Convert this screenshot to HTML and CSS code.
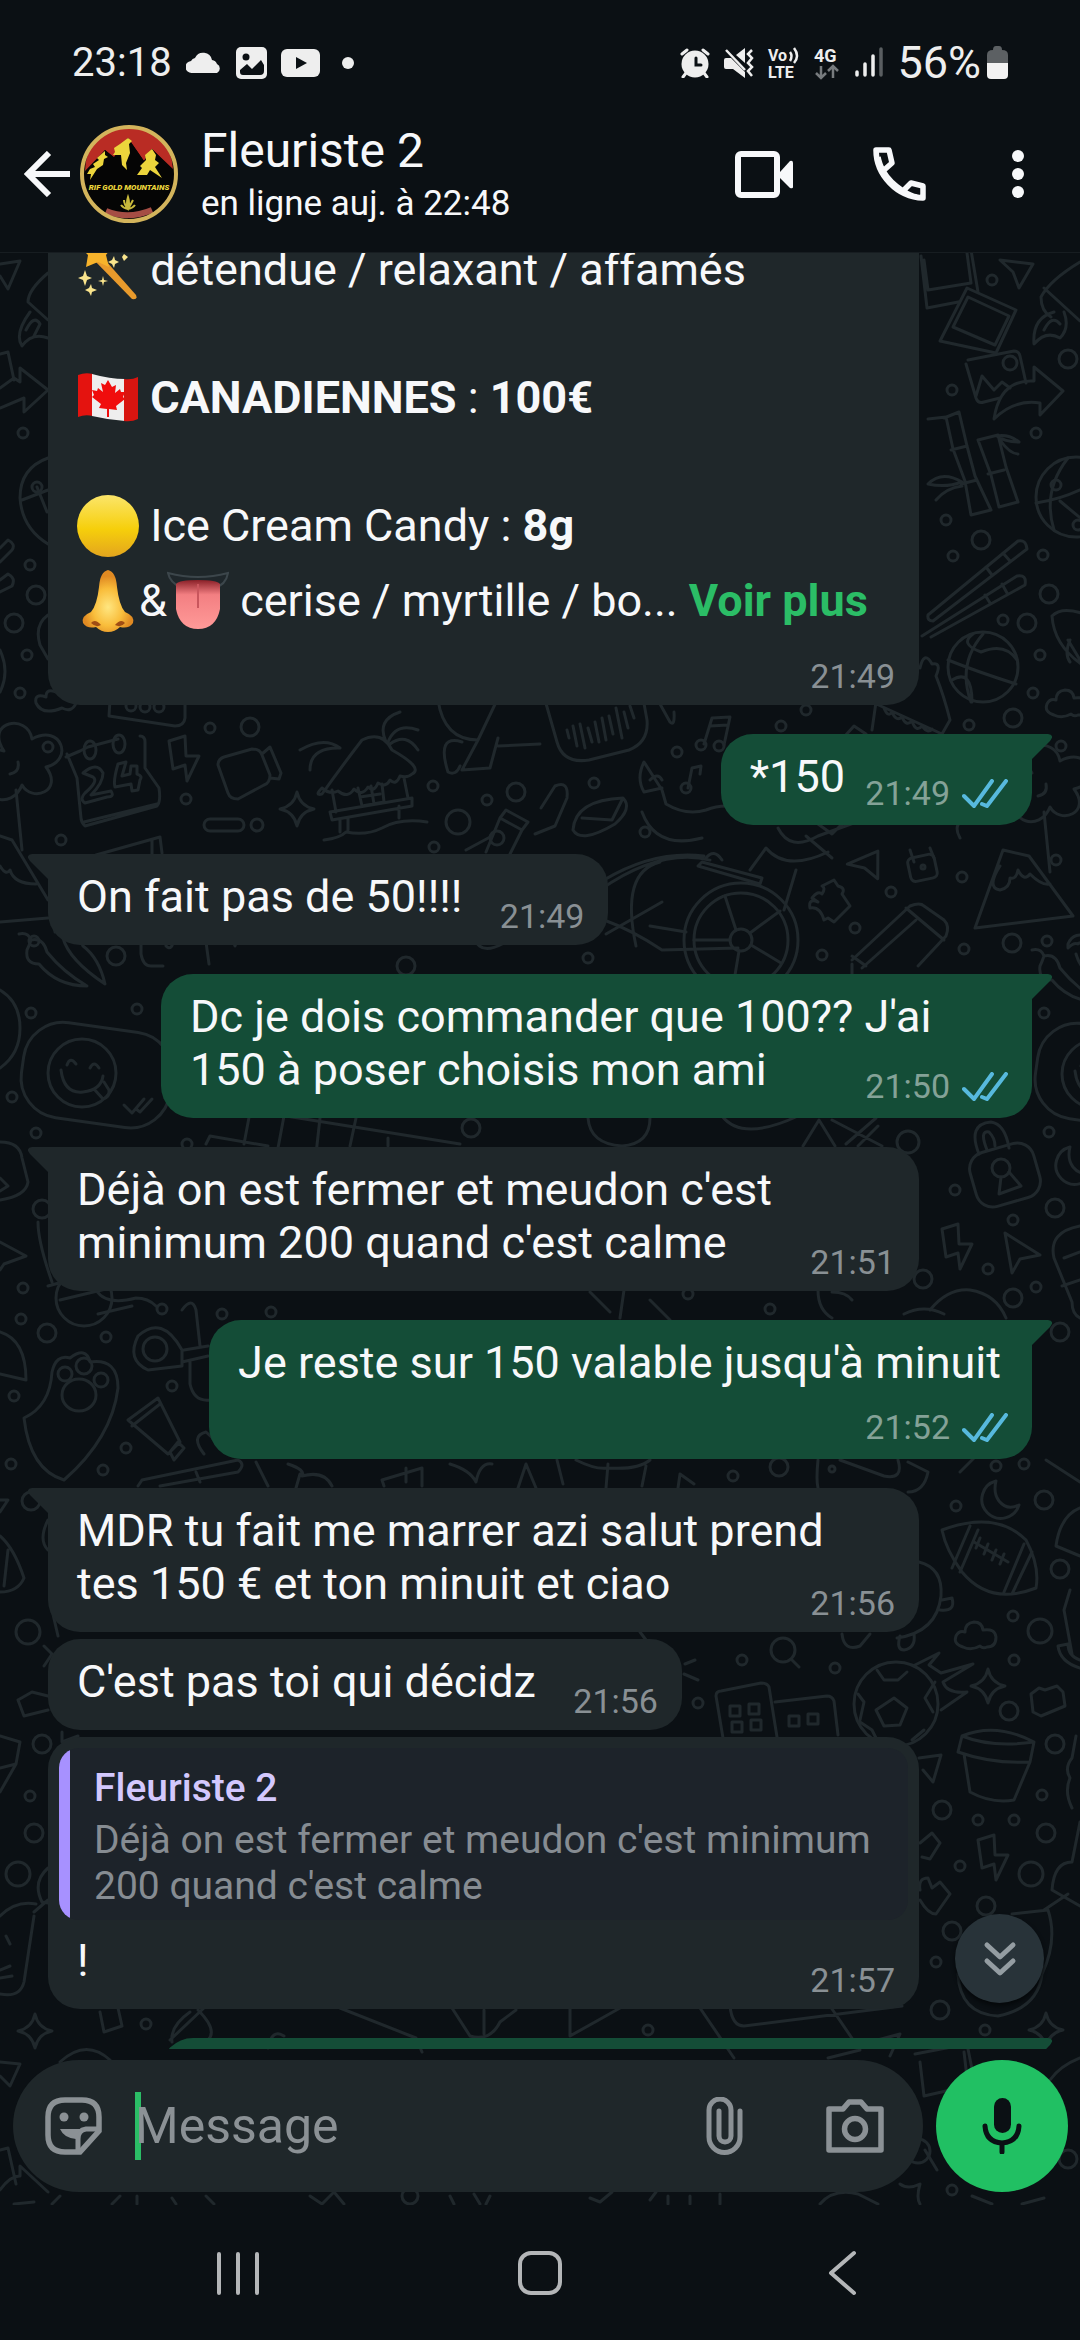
FILE: index.html
```html
<!DOCTYPE html>
<html lang="fr">

<head>
  <meta charset="UTF-8">
  <meta name="viewport" content="width=device-width, initial-scale=1.0">
  <title>Fleuriste 2</title>
  <link rel="stylesheet" href="styles.css">
</head>

<body>
  <div class="status">
    <span class="clock">23:18</span>
    <svg width="36" height="22" viewBox="0 0 36 22"><path d="M6 21a6 6 0 0 1-1-12 6 6 0 0 1 4-3 9 9 0 0 1 17 2 6 6 0 0 1 5 4 5 5 0 0 1 0 9z" fill="#eee"/></svg>
    <svg width="31" height="32" viewBox="0 0 31 32"><rect width="31" height="32" rx="5" fill="#eee"/><circle cx="10" cy="10" r="3.5" fill="#0b1014"/><path d="M4 23l7-6 5 5 9-9 3 5v6q0 4-4 4H7q-3 0-3-3z" fill="#0b1014"/></svg>
    <svg width="39" height="28" viewBox="0 0 39 28"><rect width="39" height="28" rx="6" fill="#eee"/><path d="M15 8l11 6-11 6z" fill="#0b1014"/></svg>
    <svg class="dot" width="12" height="12" viewBox="0 0 12 12"><circle cx="6" cy="6" r="6" fill="#eee"/></svg>
    <span class="space"></span>
    <svg width="30" height="30" viewBox="0 0 30 30" fill="none" stroke="#eee" stroke-width="3" stroke-linecap="round"><circle cx="15" cy="16" r="13.5" fill="#eee" stroke="none"/><path d="M2 6l5-4M28 6l-5-4M6 25l-3 4M24 25l3 4"/><path d="M16 10v7h5" stroke="#0b1014"/></svg>
    <svg width="30" height="30" viewBox="0 0 30 30"><path d="M0 12q0-2 2-2h5l14 14v6L9 21H2q-2 0-2-2zM12 7l9-7v15z" fill="#eee"/><path d="M2 2l19 20M28 2l-4 4 4 4-4 5 4 4-4 4 4 5" fill="none" stroke="#eee" stroke-width="2.5"/></svg>
    <svg width="32" height="34" viewBox="0 0 32 34" class="net"><text x="0" y="15" font-size="16">Vo</text><text x="0" y="32" font-size="16">LTE</text><path d="M22 6q3 4 0 9M26 2q6 8 0 15" fill="none" stroke="#eee" stroke-width="2.5"/></svg>
    <svg width="27" height="34" viewBox="0 0 27 34" class="net"><text x="0" y="16" font-size="18">4G</text><path d="M7 20v12M2 27l5 5 5-5M19 32V20M14 25l5-5 5 5" fill="none" stroke="#777b7e" stroke-width="2.5"/></svg>
    <svg width="28" height="31" viewBox="0 0 28 31" stroke="#eee" stroke-width="3.5" stroke-linecap="round"><path d="M2 25v3M10 17v11M18 9v19"/><path d="M26 2v26" stroke="#5a5e61"/></svg>
    <span class="battery">56%</span>
    <svg class="cell" width="21" height="33" viewBox="0 0 21 33"><path d="M6 4q0-4 3-4h3q3 0 3 4 6 0 6 5v9H0V9q0-5 6-5z" fill="#5c6063"/><path d="M0 17h21v12q0 4-4 4H4q-4 0-4-4z" fill="#f2f2f2"/></svg>
  </div>

  <header>
    <button class="back" aria-label="Retour"><svg width="46" height="46" viewBox="0 0 46 46" fill="none" stroke="#f7f8fa" stroke-width="6"><path d="M46 23H5M25 2L4 23l21 21"/></svg></button>
    <svg class="avatar" width="98" height="98" viewBox="0 0 98 98">
      <circle cx="49" cy="49" r="47" fill="#050505"/>
      <path d="M5 46a44 44 0 0 1 88-2L72 24 64 36 48 13 34 32 25 25z" fill="#b92c24"/>
      <path d="M25 25l9 8L48 13l16 23 8-12 21 22v6H5z" fill="#050505"/>
      <path d="M48 13l-8 6-6 4 1 4-2 3 8 0 1 10 5 5-1-7 4-10-1-9 3-3zM25 26l-8 7 2 2-6 4 2 3-5 2-3 5 4 0-1 6 7-11 6-4 1-6 4-2-3-2zM72 24l-7 6 1 5-6 6 2 2-5 7 10 0 3-5 12 8-7-11 4-4-4-3 1-5z" fill="#ecd53c"/>
      <text x="49" y="65" text-anchor="middle" class="logo">RIF GOLD MOUNTAINS</text>
      <path d="M48 84q-2-6 0-12 2 6 0 12-4-5-4-9M48 84q3-5 5-9M48 84q-5-1-7-4M48 84q5-1 7-4" fill="none" stroke="#c8b93c" stroke-width="2"/>
      <path d="M26 86q22 9 46-1" fill="none" stroke="#a54d44" stroke-width="6"/>
      <circle cx="49" cy="49" r="47" fill="none" stroke="#d3b45c" stroke-width="4"/>
    </svg>
    <div class="who">
      <h1>Fleuriste 2</h1>
      <p>en ligne auj. à 22:48</p>
    </div>
    <button aria-label="Appel vidéo"><svg width="58" height="48" viewBox="0 0 58 48"><rect x="3" y="4" width="39" height="41" rx="3" fill="none" stroke="#f7f8fa" stroke-width="6"/><path d="M45 22l10-11q3-1 3 2v24q0 2-3 1L45 28z" fill="#f7f8fa"/></svg></button>
    <button class="call" aria-label="Appel vocal"><svg width="53" height="54" viewBox="0 0 53 54" fill="none" stroke="#f7f8fa" stroke-width="5.5" stroke-linejoin="round"><path d="M3 3h13l3 13-9 8q7 12 20 20l8-8 12 3v12C24 50 3 28 3 3zM10 24q-4-8-5-14M30 44q8 5 14 6"/></svg></button>
    <button class="more" aria-label="Plus d'options"><svg width="12" height="48" viewBox="0 0 12 48" fill="#f7f8fa"><circle cx="6" cy="6" r="6"/><circle cx="6" cy="24" r="6"/><circle cx="6" cy="42" r="6"/></svg></button>
  </header>

  <main>
    <svg class="doodles" viewBox="0 253 1080 1952" preserveAspectRatio="xMinYMin slice">
      <defs>
        <path id="bolt" d="M-14-17l16-5 1 20 13 0-12 25-2-16-12 4z"/>
        <path id="star" d="M0-17q3 14 17 17Q3 3 0 17-3 3-17 0-3-3 0-17z"/>
        <path id="cloud" d="M-13 10q-10-3-7-11 3-6 9-4 0-9 9-10 8 0 9 8 12-2 13 7 0 10-9 10-4 2-7-1-9 5-17 1z"/>
        <path id="plane" d="M-17-12l33 4-14 24-6-16z"/>
        <path id="moon" d="M-5-18a19 19 0 1 0 23 24Q6 12-2 2-8-6-5-18z"/>
        <path id="arrow" d="M-34 28q6-40 40-38v-14L35 0 12 24V12Q-14 8-34 28z"/>
        <g id="flower"><path d="M-8-15c-20-30 24-38 28-12 30-16 42 22 14 28 18 24-14 36-24 18-10 26-46 14-28-10-30 0-26-34 10-24z"/><path d="M-2 8q10-2 8-12M4 24l6 60"/></g>
        <g id="ball"><circle r="40"/><path d="M-40 6Q0 0 32-24M-22 33Q-34-6-8-39M-16 4Q12 28 22 33M8-6l26 26"/><circle cx="-20" cy="-12" r="5"/><circle cx="2" cy="28" r="5"/></g>
        <g id="smile"><rect x="-60" y="-48" width="150" height="96" rx="40" transform="rotate(8)"/><circle r="34"/><path d="M-21-3q3 24 22 22 18-2 20-16M-15-8q3-9 9-1M8-5q4-8 9 0M12 16l9 10q7-2 6-9l-5-8"/><path d="M42 32l8 8 12-14M54 36l4 3 12-13"/></g>
        <g id="peppers"><path d="M-48-26q9-2 12 6 12-3 16 12Q-4 12 20 26-10 26-28 4-42 4-40-10-38-14-36-20M-4-22Q2 0 38 24 32-2 16-14 12-22 12-34M-12-32q6-14 22-6 7-4 10 2-8 0-10 8-8-8-12-4-4-2-10 4z"/></g>
        <g id="pot"><path d="M-34-30Q0-44 38-24l-4 20Q-4-2-38-14zM-32-12l6 38Q-4 38 18 34L34-4M-34-30Q-4-18 38-24"/></g>
        <g id="wheel"><circle r="57"/><circle r="47"/><circle r="11"/><path d="M-11 0h-36M-5-10l-11-34M9-7l30-22M10 5l30 18M-2 11l-6 36"/></g>
      </defs>
      <g fill="none" stroke="#20282c" stroke-width="3" stroke-linecap="round" stroke-linejoin="round">
        <!-- right column -->
        <path d="M921 256l6 52 52-10-8-48M924 260l4 30 43-7-4-30"/>
        <path d="M967 288l49 22-20 43-56-12zM968 297l41 19-14 29-42-18z" fill="#0b1014"/>
        <use href="#plane" x="1017" y="272"/>
        <path d="M1080 262q-30 18-39 35 0 14 10 20M1044 288l36 33M1054 312q-22 6-20 32 12-14 26-6 10-10 4-26M1044 330q8-16 16-6"/>
        <path d="M968 360l46-9q5 0 6 5l6 27M966 364l10 34q2 6 8 4l16-4M976 396l6-20 12 14 8-8 8 6"/><circle cx="1010" cy="363" r="7"/>
        <use href="#arrow" x="1028" y="391"/>
        <path d="M944 418l15-6 8 34 8 30 16 34-20 5-6-34-12-32-7-32-18 2M951 450l16-4M961 484l16-4M978 440l20-5 8 32 12 35-19 5-8-32zM988 474l16-4M997 436q12-2 22 6-14 0-22-6M1000 440q10 14 18 14M962 482q-20-12-34 2 18 4 34-2M962 486q-16 2-26 14"/>
        <use href="#ball" x="1076" y="497"/>
        <path d="M928 615l90-74q8-2 9 8l-94 72q-6 0-5-6zM922 636l95-60q10-2 8 9l-94 52M986 567l6 8M1003 553l7 8M985 595l5 8M1002 584l5 9"/>
        <circle cx="983" cy="667" r="35"/><path d="M948 660q30 12 68 24M973 634q-14 10 8 18 24-10 36 8M952 680q20-12 20 22M983 634q-26 30-12 68"/>
        <path d="M1052 616q10-10 32-2M1052 616q2 30 32 50M1068 640l12 20M1070 640q-6 14 0 22"/>
        <use href="#cloud" x="1067" y="705"/>
        <path d="M920 668q4-18 12-4 10-2 4 12 8 20 14 44l-8 14-70-32M876 702l-4 28M884 708q4 10 8 4 4 10 10 5 4 10 10 4 4 12 10 5 6 8 10 3"/>
        <use href="#flower" x="1040" y="788"/>
        <path d="M960 838q-8-14 6-20M834 748l20-22 12 8-22 30q-10 2-10-8"/>
        <!-- between the first bubbles -->
        <path d="M545 700l12 42q6 22 32 18l40-10q20-8 18-30l-4-22M567 730l2 8M573 726l4 20M580 724l5 24M588 728l4 14M595 722l4 20M602 718l4 22M609 716l4 18M616 708l6 30M624 712l4 16M630 706l4 12M660 704l10 18q5 5 4-10"/>
        <path d="M704 744l8-26 18-1-6 28M710 726l18-1M688 788l4-20 9-2-1 8"/><circle cx="701" cy="745" r="5"/><circle cx="719" cy="746" r="5"/><circle cx="686" cy="788" r="5"/>
        <path d="M644 792q-8-14 0-30l18 28 4 14q20 12 40 6 10-4 20-4M642 812q14 38 60 26M644 792l18-4M650 780q8-8 12 0"/>
        <path d="M541 808l14-22q14-6 12 12l-12 28-20 8M573 830q2-30 50-32 10 10-8 26-34 20-42 6M622 800l-10 20-30-2"/>
        <path d="M778 828q12 24 40 8l44-16M818 824l14 10 14-14M806 836l26 22"/>
        <path d="M66 757l14-6 8-4 30-8M140 736q5 0 5 6v26l14 20q2 14-2 18l-72 20q-4-4-4-8l-4-40-10-24M84 822l73-18"/><ellipse cx="90" cy="750" rx="6" ry="9"/><ellipse cx="119" cy="744" rx="6" ry="9"/>
        <path d="M83 773q14-12 20 0 0 10-12 22l20-4q4 6-4 6l-22 6q-6-4 0-10 14-12 8-16zM118 764l8-2-4 14 8-2 1-8 6 0v8q6 2 3 6l-2 10-6 1-1-7-16 3q-2-6 3-23"/>
        <use href="#bolt" x="183" y="758"/>
        <path d="M218 765q0-6 6-8l28-8q8 0 10 6l8 20q0 8-6 10l-26 14q-8 0-10-6zM262 754l8-7 11 26-2 6-9-1"/>
        <rect x="204" y="819" width="40" height="12" rx="6"/><circle cx="257" cy="825" r="6"/><use href="#star" x="297" y="809"/>
        <path d="M322 788q-8 8 0 6 20-28 40-54 20-10 30 10 32 18 20 24-4 4-12 2-4 10-10 4-4 8-12 3-4 10-10 4-6 10-14 2-6 10-16 2-8 4-16-3M340 748q-16-12-40 2M338 748q-28 0-28 22M386 742q-10-22 14-30M388 742q8-20 30-12M390 744q16-12 28 6M330 812l82-14v8l-80 14zM332 790l4 22M404 778l4 20M358 788l4 18 22-4-2-18M360 797l20-3M371 786l3 18M340 820v12M348 818v12M399 806v12M324 840q16-2 22-8 20 4 36-4 18-10 45-6"/>
        <path d="M438 700q6 40 40 40l20-42M478 740l-16 30 28-2 8-30M462 742q-26-8-14 30 8 4 12-6M498 746l42-2"/>
        <path d="M506 810l22 12-6 8-22-12zM500 818l-14 34M522 830l-12 24M492 836l-26 14"/><circle cx="497" cy="838" r="7"/>
        <path d="M36 703q-2-10 10-6 0-10 12-4 14-2 18 10-4 10-14 5-20 8-26-5M110 700l-1 16 66 10q9 0 10-8v-20"/><circle cx="131" cy="706" r="5"/><circle cx="145" cy="707" r="5"/><circle cx="159" cy="707" r="5"/>
        <use href="#flower" x="12" y="766"/>
        <path d="M96 855l64-18 2 16M152 840v14M0 836l12 4 36 60M0 866q6 10 10 4 4 14 26 14M0 922l48-4"/>
        <!-- left column -->
        <path d="M0 264l20-3-12 28-8-13M48 273Q28 290 28 302l20 18M30 312q-16 22-8 34 10-14 26-8M26 330q8-16 14-6l-6 12M0 354l8-2 6 28M0 388l14-10 6 4v-14l28 22-24 22v-14L0 408"/>
        <circle cx="23" cy="433" r="5"/><path d="M48 458q-28 10-28 40 2 30 28 46M22 500l26-10M37 487l10 25"/><circle cx="37" cy="487" r="5"/>
        <path d="M0 548l8-8q8 4 4 10L0 562M0 580l8-6q8 4 4 12L0 592M48 615q-14 10-8 30l8 14M0 650q10 22 0 42"/>
        <path d="M141 920v34q2 12 10 12h12M160 936q4 12 18 0v-4M166 936v10q6 6 8-8M203 920l6 44M472 920q0 40 30 24M504 924l4 8 4-8"/>
        <use href="#star" x="235" y="929"/><rect x="272" y="924" width="40" height="11" rx="5"/><rect x="319" y="924" width="40" height="11" rx="5"/>
        <use href="#peppers" x="67" y="960"/><use href="#smile" x="82" y="1073"/>
        <path d="M0 990q20 12 20 38T0 1068M206 1144l4-8 58 10M250 1112l-6 32M284 1116l-6 32M320 1118l-4 36M356 1118l-6 28M286 1116l174 28M388 1138v8"/>
        <path d="M0 1142q20 0 22 16l6 24q-2 14-28 18M0 1178l8 8-8 5M0 1242l26 14-22 8-4 6M38 1222q0 20 14 60M48 1286l22-6M96 1290q10 16 40 8 12 0 20 8"/>
        <!-- middle right -->
        <path d="M604 920q28 10 58 30l76-2M660 862q-40 10-24 84M600 890q60-42 110-30M604 880q50-30 100-24M650 926l36 6M606 934l56-32"/>
        <path d="M702 862l60 16-2 6-62-18zM706 858q8-10 16 2" fill="#0b1014"/><use href="#wheel" x="741" y="940"/>
        <path d="M750 870l16-22q20 24 62 4M796 870l-12 40"/>
        <path d="M812 898q6-8 10-4 4-6 0-8l12-6 4 6q8 2 4 8l8 12-16 16-6-4-4 2q-4-14-14-12-2-10 8-6z"/>
        <path d="M852 960l58-54q10-4 14 0l20 14q6 6 2 16l-28 30M862 968l54-48M906 908l38 32M852 956l14 10M852 964v10"/>
        <path d="M914 862l-4-12M934 858l-4-10"/><rect x="909" y="856" width="27" height="24" rx="5" transform="rotate(-12 922 868)"/><circle cx="923" cy="867" r="2"/>
        <use href="#plane" x="868" y="866" transform="rotate(-30 868 866)"/>
        <path d="M1003 850l-28 78 98-12-44-60zM1000 866q-14 22 0 24 10-2 10-12 6 2 8-8 6 12 12 4 12 12 20 10"/>
        <use href="#peppers" x="1080" y="976"/><use href="#smile" x="1096" y="1074"/>
        <path d="M588 1118q2 26 34 28 28-2 28-28M722 1116q20 26 76 0M803 1146l16-26 16 26M832 1120l50 26M846 1144l30-26M858 1146l20-20"/>
        <rect x="972" y="1147" width="66" height="56" rx="17" transform="rotate(-16 1005 1175)"/><circle cx="1001" cy="1168" r="9"/><path d="M1001 1177l-2 17 22-8-12-14M979 1154q-12-30 12-32 14 2 18 26M987 1150q-8-20 2-18 6 6 6 14"/>
        <use href="#moon" x="1075" y="1165"/><use href="#bolt" x="956" y="1246"/>
        <path d="M1005 1233l35 22-20 4-8 14zM1080 1226q-32 6-26 32l18 44q0 12 8 16M1064 1258l16-6M1062 1286l18-6"/>
        <path d="M818 1290q0 20 14 28M832 1292q14 0 20 8M904 1314q20-10 40 0M930 1310q18-22 40-20 26 4 36 28M590 1292l20 20M624 1290l-4 28M650 1300l20 20"/>
        <!-- middle left -->
        <circle cx="84" cy="1298" r="28"/><path d="M98 1314l34-8M60 1300l50-12"/>
        <path d="M0 1332q26 8 26 48L0 1374M24 1418q26-12 28-46 4-18 18-14 16-12 20 4 28-4 28 26-6 50-54 92-34-10-40-62z"/><circle cx="65" cy="1374" r="7"/><circle cx="84" cy="1366" r="8"/><circle cx="101" cy="1380" r="7"/><ellipse cx="79" cy="1395" rx="17" ry="16"/>
        <path d="M182 1350q-20-36-44-14-12 24 10 34l34-4zM184 1350l24-4M182 1362l26-6M182 1310q10-14 14 0l4 36M190 1362v22q4 18 20 16"/><circle cx="155" cy="1349" r="12"/>
        <path d="M128 1420l30-22 22 44-12 12zM132 1426l28-22M170 1452l8-10 6 6-10 12zM138 1486l4-6 96-20q8 4 0 12l-78 14M196 1472l4 10M204 1454q-14-18 2-22l26 24M256 1462l12 24M288 1464q18 6 14 12 22-6 30 10M300 1474l-4 14M384 1486l-2-6 40-12v18M406 1468v14M450 1464q20 6 26 18 4-20 16-18M518 1488l8-24 10 24"/>
        <path d="M0 1500l8 0-8 12M0 1536q14 12 24 42-6 14-24 14M8 1550l-4 36M48 1520q-10 20 0 30M52 1610l6 26M44 1646l8 8-8 12M18 1700l14-8 16 4M18 1700l6 16 24-6M0 1736l20 6-4 22-16 4M16 1764l-16 28M62 1732v10l16-6M48 1868q-16 14-6 34l12 2M36 1904q-20-4-36 12M0 1994q20 4 24-12l10-66M34 1912l14-12M6 1936l4 8M0 1970l10-4M0 1978l12-2"/>
        <path d="M557 1460l6 24M608 1464l-2 24M646 1466l-4 20M576 1460q20 10 32 8 30 2 42-8M818 1460q-2 20 0 28M840 1460l44 16q20 4 14-16M908 1462l20 10q-4 20-20 20M960 1472l14-14M678 1488l2-14 14 10"/>
        <use href="#moon" x="1001" y="1499"/>
        <path d="M942 1530q54-20 84 10 14 26 10 48-46 18-74-16-16-22-20-42zM952 1568l18-42M960 1572l18-42M1004 1592l20-48M1012 1594l20-42M974 1542l34 20M980 1538l-4 10M988 1544l-4 10M996 1550l-4 10M1004 1554l-4 10M1046 1460l34 22M1080 1508q-20 8-24 38l24 10"/>
        <path d="M919 1562q24 6 22 34-4 36-44 42M942 1600l10-2q4 14-12 12M900 1636q-4 14 4 14 12-2 10-16M842 1634q2 18 18 12l10-12"/>
        <use href="#cloud" x="976" y="1637"/><circle cx="783" cy="1650" r="12"/><path d="M791 1659l8 8M685 1664l10-4M684 1674l14 6M640 1632l6 8"/>
        <circle cx="896" cy="1704" r="42"/><path d="M877 1670l7 10 14 0 9-8M876 1710l18-12 13 10-7 17-16 1zM858 1694l6 8-4 18M935 1682l-10 16 8 14M915 1665l24-12-10 12 12 8 32-9-30 18q4 12 24 10l-26 18M860 1722l12 8 4 8M912 1740l12-10"/>
        <path d="M723 1738l-7-42q0-5 5-5l40-8q6 0 8 4l8 50M775 1702l52-6q5 0 7 5l4 34M730 1706h10v10h-10zM749 1704h10v10h-10zM732 1722h10v10h-10zM751 1720h10v10h-10zM789 1716h10v10h-10zM808 1714h10v10h-10z"/>
        <use href="#star" x="988" y="1686"/><path d="M1031 1694l8-6 6 2 12-4 6 6 2 14-24 10-8-4zM1080 1668q-20-6-22-22l10-2q0 12 12 16M1070 1590l-6 20 8 44"/>
        <use href="#pot" x="996" y="1766"/>
        <path d="M919 1758l22-3-8 27-10-12M920 1843l12-10 8 10-10 16-8-2M1076 1736l-4 22q-8 10-2 20-6 14 2 30"/>
        <use href="#bolt" x="992" y="1857"/><path d="M920 1890q-2-12 8-12l4 10 8-6 10 12-14 20q-8 0-16-14M1080 1822l-8 40q-18 0-20 28l28 16M1012 1914l36-4q10 30-6 64-4 34-44 42-38-2-40-42M1044 1910l24-16"/>
        <use href="#star" x="1046" y="2030"/>
        <!-- below the last message -->
        <path d="M100 2012l4 20 18-6-4-18M170 2040l36-34M198 2010q20 20 10 30M190 2012q-20 14-18 30M340 2008l76 30 6 14M268 2048q4-20 16-12M452 2008l18 28q20 6 30-14l16-12M484 2010v24M570 2008v28l50-28M700 2008l34 50M730 2006q2 20 14 20l158-20M830 2006l30 44-32 8M870 2042l30-8-10 22"/>
        <use href="#star" x="35" y="2031"/>
        <path d="M60 2062q26-24 50-2M0 2062l20 2-10 22-10-10M915 2054l52-10 12 60M920 2062l4 34 44-10-4-34M1050 2080q10-14 30-22M925 2150l12 20M0 2150l8-2 8 36M0 2190q10-14 20-14v-10l28 26M14 2204l20-2M60 2196l-8 8M120 2196l-8 8M137 2196v8M172 2198l4 6M206 2196l8 8M310 2196l12 8 12-12 10 12M480 2204l-6-10M590 2198l10 4 12-10M720 2194v10M650 2200l6-8"/>
        <path d="M820 2204q14-16 38-10l20 10M900 2184q8 6 20 0-4 14 0 20M972 2196l20 8M1022 2204l22-6M450 2196l4 8M490 2196l-4 8M668 2196v8M690 2196v8"/>
        <!-- dots -->
        <circle cx="992" cy="280" r="5"/><circle cx="1068" cy="359" r="9"/><circle cx="952" cy="390" r="5"/><circle cx="1036" cy="433" r="5"/><circle cx="946" cy="520" r="5"/><circle cx="981" cy="540" r="9"/><circle cx="953" cy="556" r="5"/><circle cx="1043" cy="555" r="5"/><circle cx="1049" cy="594" r="9"/><circle cx="1003" cy="620" r="5"/><circle cx="1027" cy="623" r="9"/><circle cx="1040" cy="655" r="5"/><circle cx="1033" cy="693" r="5"/><circle cx="1013" cy="718" r="9"/><circle cx="969" cy="725" r="5"/><circle cx="1061" cy="746" r="5"/>
        <circle cx="30" cy="565" r="5"/><circle cx="36" cy="595" r="9"/><circle cx="14" cy="623" r="9"/><circle cx="27" cy="655" r="5"/><circle cx="20" cy="693" r="5"/><circle cx="48" cy="747" r="5"/><circle cx="61" cy="840" r="5"/><circle cx="210" cy="728" r="5"/><circle cx="250" cy="727" r="9"/><circle cx="186" cy="799" r="5"/><circle cx="433" cy="786" r="5"/><circle cx="487" cy="800" r="5"/><circle cx="516" cy="792" r="9"/><circle cx="458" cy="822" r="12"/><circle cx="434" cy="847" r="5"/>
        <circle cx="677" cy="752" r="5"/><circle cx="594" cy="783" r="5"/><circle cx="645" cy="832" r="5"/><circle cx="781" cy="726" r="5"/><circle cx="806" cy="710" r="5"/><circle cx="34" cy="941" r="5"/><circle cx="116" cy="956" r="9"/><circle cx="31" cy="1013" r="5"/><circle cx="137" cy="1009" r="5"/><circle cx="12" cy="1097" r="5"/><circle cx="36" cy="1133" r="5"/><circle cx="42" cy="1209" r="9"/><circle cx="23" cy="1288" r="5"/><circle cx="406" cy="966" r="9"/><circle cx="471" cy="1128" r="9"/><circle cx="187" cy="1144" r="5"/>
        <circle cx="588" cy="958" r="5"/><circle cx="822" cy="955" r="5"/><circle cx="891" cy="892" r="5"/><circle cx="855" cy="928" r="5"/><circle cx="962" cy="877" r="5"/><circle cx="964" cy="949" r="5"/><circle cx="1012" cy="943" r="9"/><circle cx="1047" cy="941" r="5"/><circle cx="1056" cy="860" r="5"/><circle cx="1044" cy="1013" r="5"/><circle cx="1049" cy="1132" r="5"/><circle cx="908" cy="1142" r="11"/><circle cx="955" cy="1190" r="5"/><circle cx="1055" cy="1208" r="9"/><circle cx="1013" cy="1220" r="5"/><circle cx="988" cy="1269" r="5"/><circle cx="1036" cy="1287" r="5"/><circle cx="1013" cy="1298" r="9"/><circle cx="923" cy="1279" r="9"/><circle cx="770" cy="1309" r="5"/><circle cx="688" cy="1294" r="5"/><circle cx="1060" cy="1332" r="9"/>
        <circle cx="21" cy="1319" r="5"/><circle cx="47" cy="1333" r="9"/><circle cx="106" cy="1337" r="5"/><circle cx="162" cy="1309" r="5"/><circle cx="222" cy="1314" r="5"/><circle cx="271" cy="1312" r="5"/><circle cx="14" cy="1396" r="5"/><circle cx="172" cy="1386" r="5"/><circle cx="126" cy="1448" r="5"/><circle cx="103" cy="1470" r="5"/><circle cx="11" cy="1464" r="5"/><circle cx="31" cy="1501" r="9"/><circle cx="28" cy="1632" r="12"/><circle cx="42" cy="1744" r="9"/><circle cx="30" cy="1796" r="5"/><circle cx="34" cy="1833" r="9"/><circle cx="18" cy="1874" r="12"/>
        <circle cx="733" cy="1476" r="5"/><circle cx="779" cy="1467" r="9"/><circle cx="832" cy="1469" r="3"/><circle cx="996" cy="1466" r="5"/><circle cx="1024" cy="1464" r="5"/><circle cx="956" cy="1506" r="5"/><circle cx="1044" cy="1500" r="9"/><circle cx="1060" cy="1569" r="9"/><circle cx="1013" cy="1616" r="5"/><circle cx="1040" cy="1631" r="12"/><circle cx="1014" cy="1660" r="5"/><circle cx="742" cy="1660" r="5"/><circle cx="835" cy="1668" r="5"/><circle cx="698" cy="1703" r="5"/><circle cx="1009" cy="1711" r="9"/><circle cx="1055" cy="1744" r="9"/><circle cx="1042" cy="1795" r="5"/><circle cx="942" cy="1810" r="9"/><circle cx="978" cy="1820" r="5"/><circle cx="1014" cy="1820" r="5"/><circle cx="1046" cy="1833" r="9"/><circle cx="960" cy="1866" r="5"/><circle cx="1031" cy="1874" r="12"/><circle cx="986" cy="1906" r="9"/><circle cx="952" cy="1931" r="9"/><circle cx="936" cy="1962" r="5"/><circle cx="940" cy="2010" r="9"/><circle cx="985" cy="2030" r="5"/><circle cx="648" cy="2030" r="5"/><circle cx="146" cy="2024" r="5"/><circle cx="410" cy="2196" r="8"/><circle cx="952" cy="2190" r="5"/><circle cx="918" cy="2151" r="12"/><circle cx="1068" cy="2159" r="9"/>
      </g>
    </svg>

    <section class="messages">
      <div class="row">
        <div class="bubble in wide own-line">
          <p class="line"><svg class="emoji" viewBox="0 0 62 62"><path d="M22 14l37 42q2 5-4 4L16 20z" fill="#e89a2c"/><path d="M16 0l8 7 12 0-7 9 3 12-11-5-12 5 2-12-9-9 12-1z" fill="#f7b32b"/><g fill="#f9e48c"><path d="M8 31l2 6 5 2-5 2-2 6-2-6-5-2 5-2zM14 45l1 4 5 2-5 2-1 4-2-4-4-2 4-2zM26 37l1 4 4 1-4 1-1 4-1-4-4-1 4-1zM37 17l1 4 4 2-4 2-1 4-2-4-4-2 4-2zM47 15l4 3-4 4-2-4z"/></g></svg> détendue / relaxant / affamés</p>
          <p>&nbsp;</p>
          <p class="line"><svg class="emoji" viewBox="0 0 62 62"><path d="M1 8q7-3 15-1v42q-8-2-15 1z" fill="#e4130f"/><path d="M15 7q18 5 33 5v42q-16-1-33-5z" fill="#eee"/><path d="M47 12q8 1 14-2v42q-6 3-14 2z" fill="#d81510"/><path d="M31 13l4 7 4-2-1 8 5-4 1 3 4 0-2 5 2 2-9 7 1 4-8-1v8h-2v-8l-8-1 2-4-9-7 2-2-2-5 5 1 1-3 5 4-2-9 4 2z" fill="#f00d0d"/></svg> <b>CANADIENNES</b> : <b>100€</b></p>
          <p>&nbsp;</p>
          <p class="line"><svg class="emoji" viewBox="0 0 62 62"><defs><linearGradient id="gold" x2="0" y2="1"><stop offset="0" stop-color="#fbe56a"/><stop offset=".55" stop-color="#f6cf0b"/><stop offset="1" stop-color="#e3a51e"/></linearGradient></defs><circle cx="31" cy="31" r="31" fill="url(#gold)"/></svg> Ice Cream Candy : <b>8g</b></p>
          <p class="line"><svg class="emoji" viewBox="0 0 62 62"><defs><radialGradient id="skin" cy=".6"><stop offset="0" stop-color="#ffe680"/><stop offset=".6" stop-color="#f9bd3b"/><stop offset="1" stop-color="#e08a22"/></radialGradient></defs><path d="M31 0q8 2 9 17 2 18 8 25 10 4 8 11-4 6-13 4-5 5-12 5t-12-5q-9 2-13-4-2-7 8-11 6-7 8-25 1-15 9-17z" fill="url(#skin)"/><path d="M14 53q4-5 10 2-5 3-10-2zM38 55q6-7 10-2-4 5-10 2z" fill="#a04d14"/></svg>&amp;<svg class="emoji" viewBox="0 0 62 62"><defs><linearGradient id="tongue" x2="0" y2="1"><stop offset="0" stop-color="#8a2028"/><stop offset=".3" stop-color="#f37f82"/><stop offset="1" stop-color="#ff9a98"/></linearGradient></defs><path d="M1 3q30 8 60 0-2 12-14 15-16-6-32 0Q3 13 1 3z" fill="#1f272b" stroke="#3c464b" stroke-width="2"/><path d="M9 14q3-4 22-4t22 4v25q-4 20-22 20T9 39z" fill="url(#tongue)"/><path d="M31 14v24" stroke="#c9565d" stroke-width="2"/></svg> cerise / myrtille / bo... <button class="see-more">Voir plus</button></p>
          <div class="meta">21:49</div>
        </div>
      </div>

      <div class="row">
        <div class="bubble out tail">
          <svg class="tip" viewBox="0 0 21 28"><path d="M0 0h17q7 1 2 7L0 26z"/></svg>
          <p>*150<i></i></p>
          <div class="meta">21:49 <svg class="ticks" viewBox="0 0 46 29"><path d="M2 17l10 10L30 2M20 25l5 2L44 2"/></svg></div>
        </div>
      </div>

      <div class="row">
        <div class="bubble in tail">
          <svg class="tip" viewBox="0 0 21 28"><path d="M21 0H4q-7 1-2 7l19 19z"/></svg>
          <p>On fait pas de 50!!!!<i></i></p>
          <div class="meta">21:49</div>
        </div>
      </div>

      <div class="row">
        <div class="bubble out tail wide">
          <svg class="tip" viewBox="0 0 21 28"><path d="M0 0h17q7 1 2 7L0 26z"/></svg>
          <p>Dc je dois commander que 100?? J'ai<br>150 à poser choisis mon ami</p>
          <div class="meta">21:50 <svg class="ticks" viewBox="0 0 46 29"><path d="M2 17l10 10L30 2M20 25l5 2L44 2"/></svg></div>
        </div>
      </div>

      <div class="row">
        <div class="bubble in tail wide">
          <svg class="tip" viewBox="0 0 21 28"><path d="M21 0H4q-7 1-2 7l19 19z"/></svg>
          <p>Déjà on est fermer et meudon c'est<br>minimum 200 quand c'est calme</p>
          <div class="meta">21:51</div>
        </div>
      </div>

      <div class="row">
        <div class="bubble out tail own-line">
          <svg class="tip" viewBox="0 0 21 28"><path d="M0 0h17q7 1 2 7L0 26z"/></svg>
          <p>Je reste sur 150 valable jusqu'à minuit</p>
          <div class="meta">21:52 <svg class="ticks" viewBox="0 0 46 29"><path d="M2 17l10 10L30 2M20 25l5 2L44 2"/></svg></div>
        </div>
      </div>

      <div class="row">
        <div class="bubble in tail wide">
          <svg class="tip" viewBox="0 0 21 28"><path d="M21 0H4q-7 1-2 7l19 19z"/></svg>
          <p>MDR tu fait me marrer azi salut prend<br>tes 150 € et ton minuit et ciao</p>
          <div class="meta">21:56</div>
        </div>
      </div>

      <div class="row next">
        <div class="bubble in">
          <p>C'est pas toi qui décidz<i></i></p>
          <div class="meta">21:56</div>
        </div>
      </div>

      <div class="row next">
        <div class="bubble in wide reply">
          <blockquote>
            <strong>Fleuriste 2</strong>
            Déjà on est fermer et meudon c'est minimum 200 quand c'est calme
          </blockquote>
          <p>!</p>
          <div class="meta">21:57</div>
        </div>
      </div>

      <div class="row peek">
        <div class="bubble out tail">
          <svg class="tip" viewBox="0 0 21 28"><path d="M0 0h17q7 1 2 7L0 26z"/></svg>
        </div>
      </div>

      <button class="to-bottom" aria-label="Aller en bas"><svg width="34" height="36" viewBox="0 0 34 36" fill="none" stroke="#949da2" stroke-width="5" stroke-linecap="round" stroke-linejoin="round"><path d="M4 4l13 12L30 4M4 20l13 12 13-12"/></svg></button>
    </section>

    <form class="composer" onsubmit="return false">
      <div class="field">
        <button type="button" aria-label="Autocollants"><svg width="57" height="58" viewBox="0 0 57 58"><path d="M20 3h17q17 0 17 17v14L35 55H20Q3 55 3 38V20Q3 3 20 3z" fill="none" stroke="#8b9195" stroke-width="5.5"/><path d="M54 32H41q-8 1-8 10v13" fill="none" stroke="#8b9195" stroke-width="5"/><circle cx="19" cy="20" r="4.500" fill="#8b9195"/><circle cx="39" cy="20" r="4.500" fill="#8b9195"/><path d="M15 32h24q-8 3-8 10-12-1-16-10z" fill="#8b9195"/></svg></button>
        <span class="caret"></span>
        <input type="text" placeholder="Message" aria-label="Message">
        <button type="button" aria-label="Joindre"><svg width="37" height="58" viewBox="0 0 37 58" fill="none" stroke="#8b9195" stroke-width="5" stroke-linecap="round"><path d="M34 14v26a15 15 0 0 1-31 0V13a11 11 0 0 1 22 0v26a6 6 0 0 1-12 0V14"/></svg></button>
        <button type="button" class="camera" aria-label="Appareil photo"><svg width="58" height="54" viewBox="0 0 58 54" fill="none" stroke="#8b9195" stroke-width="5.500" stroke-linejoin="round"><path d="M3 10h14l6-7h12l6 7h14v41H3z"/><circle cx="29" cy="30" r="10.500"/></svg></button>
      </div>
      <button type="button" class="mic" aria-label="Message vocal"><svg width="40" height="56" viewBox="0 0 40 56"><rect x="12" y="0" width="17" height="35" rx="8.500" fill="#0b1014"/><path d="M3 28q1 16 17 17 16-1 17-17M20 45v9" fill="none" stroke="#0b1014" stroke-width="5" stroke-linecap="round"/></svg></button>
    </form>
  </main>

  <nav>
    <button aria-label="Récents"><svg width="44" height="46" viewBox="0 0 44 46" stroke="#b4b6b8" stroke-width="4" stroke-linecap="round"><path d="M3 4v39M22 4v39M41 4v39"/></svg></button>
    <button aria-label="Accueil"><svg width="44" height="46" viewBox="0 0 44 46" fill="none" stroke="#b4b6b8" stroke-width="4"><rect x="2" y="3" width="40" height="40" rx="11"/></svg></button>
    <button aria-label="Précédent"><svg width="44" height="46" viewBox="0 0 44 46" fill="none" stroke="#b4b6b8" stroke-width="4" stroke-linecap="round" stroke-linejoin="round"><path d="M34 3L11 23l23 20"/></svg></button>
  </nav>
</body>

</html>
```
FILE: styles.css
```css
* {
  box-sizing: border-box;
}

body {
  display: flex;
  flex-direction: column;
  height: 100vh;
  margin: 0;
  background-color: #0b1014;
  color: #f7f8fa;
  font-family: Roboto, "Liberation Sans", sans-serif;
  font-size: 45px;
  line-height: 53px;
  overflow: hidden;
}

h1,
p,
blockquote {
  margin: 0;
  font-weight: 400;
}

svg {
  display: block;
  flex: none;
}

button {
  display: block;
  flex: none;
  padding: 0;
  border: none;
  background: none;
  color: inherit;
  font: inherit;
}

/* status bar */
.status {
  display: flex;
  align-items: center;
  gap: 14px;
  height: 95px;
  padding: 30px 72px 0;
  color: #eee;
  font-size: 40px;
}

.space {
  flex: 1;
}

.dot {
  margin-left: 8px;
}

.battery {
  font-size: 45px;
}

.cell {
  margin-left: -8px;
}

.net {
  overflow: visible;
}

.net text {
  fill: #eee;
  font-weight: 700;
}

/* header */
header {
  display: flex;
  align-items: center;
  height: 158px;
  padding: 0 56px 0 24px;
  border-bottom: 1px solid #171d21;
}

.avatar {
  margin-left: 10px;
}

.logo {
  fill: #ecd53c;
  font-size: 8px;
  font-style: italic;
  font-weight: 900;
}

.who {
  flex: 1;
  padding: 2px 0 0 23px;
}

.who h1 {
  font-size: 48px;
  line-height: 58px;
}

.who p {
  font-size: 35px;
  line-height: 48px;
}

.call {
  margin-left: 80px;
}

.more {
  margin-left: 86px;
}

/* conversation */
main {
  position: relative;
  display: flex;
  flex: 1;
  flex-direction: column;
  min-height: 0;
}

.doodles {
  position: absolute;
  top: 0;
  left: 0;
  width: 100%;
  height: 100%;
}

.messages {
  position: relative;
  display: flex;
  flex: 1;
  flex-direction: column;
  justify-content: flex-end;
  min-height: 0;
  padding: 0 48px;
  overflow: hidden;
}

.row {
  display: flex;
  flex: none;
  margin-top: 29px;
}

.row.next {
  margin-top: 7px;
}

.bubble {
  position: relative;
  max-width: 871px;
  padding: 16px 31px 9px 29px;
  border-radius: 32px;
}

.wide {
  width: 871px;
}

.in {
  background-color: #1f272a;
}

.out {
  margin-left: auto;
  padding-bottom: 12px;
  background-color: #144d37;
}

.in.tail {
  border-top-left-radius: 0;
}

.out.tail {
  border-top-right-radius: 0;
}

.tip {
  position: absolute;
  top: 0;
  width: 21px;
  height: 28px;
}

.in .tip {
  left: -20px;
  fill: #1f272a;
}

.out .tip {
  right: -20px;
  fill: #144d37;
}

/* keeps room for the time on the last line */
.bubble i {
  display: inline-block;
  width: 115px;
}

.out i {
  width: 156px;
}

.line {
  line-height: 75px;
}

.emoji {
  display: inline-block;
  width: 62px;
  height: 62px;
  vertical-align: -16px;
}

.see-more {
  display: inline;
  color: #2bbd66;
  font-weight: 700;
}

.meta {
  display: flex;
  align-items: center;
  justify-content: flex-end;
  gap: 12px;
  margin: -27px -7px 0 0;
  color: #899094;
  font-size: 34px;
  line-height: 40px;
}

.out .meta {
  margin-top: -30px;
  color: #84a297;
}

.own-line .meta {
  margin-top: 18px;
}

.ticks {
  width: 46px;
  height: 29px;
  fill: none;
  stroke: #57b9dd;
  stroke-width: 4;
  stroke-linecap: round;
}

.reply {
  padding-top: 11px;
}

blockquote {
  position: relative;
  margin: 0 -20px 14px -18px;
  padding: 17px 20px 11px 35px;
  border-radius: 20px;
  background-color: #1d232a;
  color: #868c92;
  font-size: 39px;
  line-height: 46px;
  overflow: hidden;
}

blockquote::before {
  content: "";
  position: absolute;
  top: 0;
  bottom: 0;
  left: 0;
  width: 11px;
  background-color: #a791ff;
}

blockquote strong {
  display: block;
  margin-bottom: 6px;
  color: #d3c8fd;
  font-weight: 500;
}

.peek {
  height: 11px;
}

.peek .bubble {
  width: 871px;
  height: 91px;
}

.to-bottom {
  position: absolute;
  right: 36px;
  bottom: 46px;
  display: flex;
  align-items: center;
  justify-content: center;
  width: 89px;
  height: 89px;
  border-radius: 50%;
  background-color: #283339;
  box-shadow: 0 3px 4px #05080a;
}

/* composer */
.composer {
  position: relative;
  display: flex;
  gap: 13px;
  padding: 11px 12px 13px 13px;
}

.field {
  display: flex;
  flex: 1;
  align-items: center;
  min-width: 0;
  padding: 0 39px 0 32px;
  border-radius: 66px;
  background-color: #1f272a;
}

.caret {
  width: 6px;
  height: 68px;
  margin-left: 33px;
  background-color: #2bbd66;
}

.field input {
  flex: 1;
  min-width: 0;
  height: 68px;
  margin-left: -6px;
  padding: 0;
  border: none;
  outline: none;
  background: none;
  color: #f7f8fa;
  font: inherit;
  font-size: 50px;
}

.field input::placeholder {
  color: #8b9195;
  opacity: 1;
}

.camera {
  margin-left: 83px;
}

.mic {
  display: flex;
  align-items: center;
  justify-content: center;
  width: 132px;
  height: 132px;
  border-radius: 50%;
  background-color: #21c063;
}

/* system navigation */
nav {
  display: flex;
  align-items: center;
  justify-content: space-between;
  height: 135px;
  padding: 0 216px;
}
```
